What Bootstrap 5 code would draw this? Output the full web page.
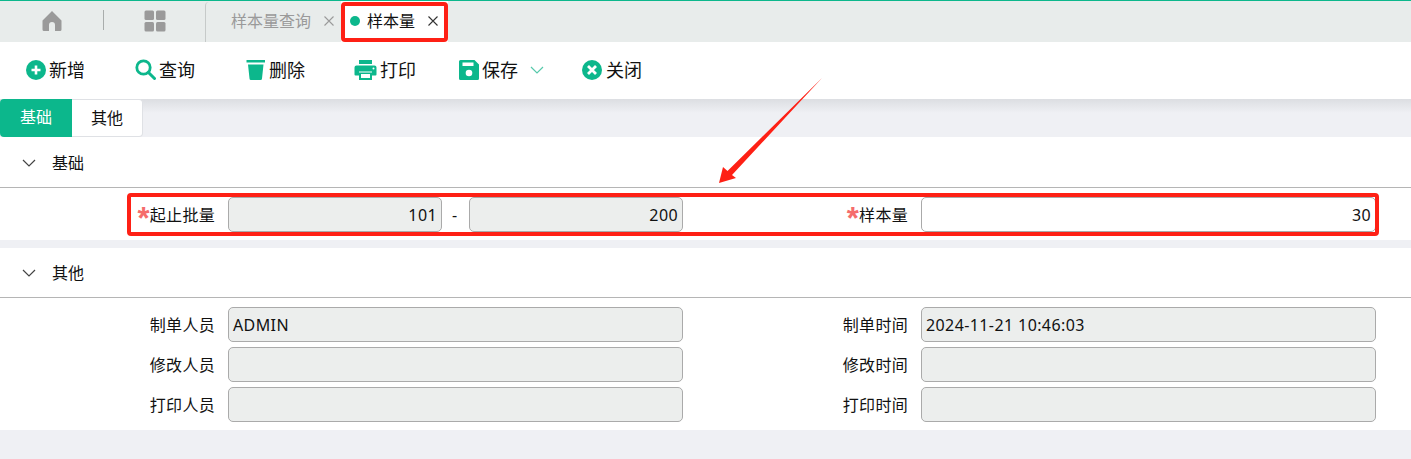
<!DOCTYPE html>
<html lang="zh">
<head>
<meta charset="utf-8">
<title>样本量</title>
<link href="https://cdn.jsdelivr.net/npm/bootstrap@5.3.0/dist/css/bootstrap.min.css" rel="stylesheet">
<style>
html,body{height:459px;overflow:hidden}
body{position:relative;background:#eff0f4;font-family:"Noto Sans","Noto Sans CJK SC",sans-serif;font-size:16px;color:#111}
.topline{height:1px;background:#0cb78c}
.tabbar{height:41px;background:#e8eceb}
.homecell{width:103px;padding-bottom:1px}
.sep{width:1px;height:20px;background:#a9adac;margin-top:9px}
.gridcell{width:101px;padding-bottom:1px}
.tabzone{border-left:1px solid #c6cac9;border-top-left-radius:4px;margin-top:1px;padding:0 0 3px 25px;width:136px;white-space:nowrap;gap:13px}
.tabtext{color:#9a9a9a;line-height:38px}
.closex{display:block}
.activetab{width:107px;height:41px;background:#fff;padding:0 0 2px 9px}
.activetab .dotgreen{width:10px;height:10px;border-radius:50%;background:#0cb78c;margin-right:7px}
.activetab .closex{margin-left:13px}
.toolbar{height:57px;background:#fff;font-size:18px;padding-left:26px}
.tool{height:55px;display:flex;align-items:center;gap:3px;color:#111;line-height:1;flex:none}
.tool1{width:109px}.tool2{width:111px}.tool3{width:108px}.tool4{width:105px}.tool5{width:123px}
.tool6{gap:4px}
.chev{margin-left:9px}
.band{height:38px;background:linear-gradient(#dcdee2,#eff0f4 14px,#eff0f4)}
.stab{height:38px;width:72px;text-align:center;line-height:37px;background:#0cb78c;color:#fff;border-radius:4px 0 0 4px}
.stab2{width:71px;background:#fff;color:#111;border:1px solid #dfe1e5;border-left:0;border-radius:0 4px 4px 0}
.panel{background:#fff}
.panel1{height:103px}
.panel2{height:182px}
.panelhead{height:51px;border-bottom:1px solid #b5b5b5;padding:2px 0 0 22px;gap:16px;line-height:1}
.panel2 .panelhead{height:50px;padding-top:1px}
.fgrid{display:grid;grid-template-columns:228px 455px 238px 455px;row-gap:5px;align-items:center;padding-top:9px}
.flabel{text-align:right;padding-right:13px;line-height:34px;white-space:nowrap;letter-spacing:.3px}
.star{font-family:"Liberation Sans",sans-serif;font-weight:700;color:#f56c6c;font-size:31px;line-height:1;vertical-align:-8px;display:inline-block;margin-right:0;height:22px}
.finput{height:35px;border:1px solid #aaa;border-radius:5px;background:#eceeed;padding:0 4px;line-height:34px;color:#111;white-space:nowrap;overflow:hidden;letter-spacing:.4px}
.finput.num{text-align:right}
.finput.live{background:#fff}
.halfa,.halfb{width:214px}
.rangewrap{display:flex;align-items:center}
.dash{width:27px;text-align:center;padding-right:2px}
.redbox{position:absolute;border:4px solid #fe2015;border-radius:4px;pointer-events:none}
.redtab{left:341px;top:2px;width:107px;height:40px}
.redfield{left:127px;top:193px;width:1252px;height:43px}
.arrow{position:absolute;left:715px;top:75px;pointer-events:none}
</style>
</head>
<body>
<div class="topline"></div>
<div class="tabbar d-flex">
  <div class="homecell d-flex justify-content-center align-items-center">
    <svg width="22" height="22" viewBox="0 0 22 22"><path d="M11 1 1.500 10.500v9a1.500 1.500 0 0 0 1.500 1.500H8v-6a3 3 0 0 1 6 0v6h5a1.500 1.500 0 0 0 1.500-1.500v-9z" fill="#9a9a9a"/></svg>
  </div>
  <div class="sep"></div>
  <div class="gridcell d-flex justify-content-center align-items-center">
    <svg width="22" height="22" viewBox="0 0 22 22"><g fill="#9a9a9a"><rect x="0.500" y="0.500" width="9.500" height="9.500" rx="1.500"/><rect x="12" y="0.500" width="9.500" height="9.500" rx="1.500"/><rect x="0.500" y="12" width="9.500" height="9.500" rx="1.500"/><rect x="12" y="12" width="9.500" height="9.500" rx="1.500"/></g></svg>
  </div>
  <div class="tabzone d-flex align-items-center"><span class="tabtext">样本量查询</span><svg class="closex" width="10" height="10" viewBox="0 0 10 10"><path d="m.5.500 9 9M9.500.500l-9 9" stroke="#9a9a9a" stroke-width="1.100"/></svg></div>
  <div class="activetab d-flex align-items-center"><span class="dotgreen"></span><span>样本量</span><svg class="closex" width="10" height="10" viewBox="0 0 10 10"><path d="m.5.500 9 9M9.500.500l-9 9" stroke="#333" stroke-width="1.100"/></svg></div>
</div>
<div class="toolbar d-flex">
  <div class="tool tool1"><svg width="20" height="20" viewBox="0 0 20 20"><circle cx="10" cy="10" r="10" fill="#0cb78c"/><path d="M10 5.500v9M5.500 10h9" stroke="#fff" stroke-width="2.600"/></svg><span>新增</span></div>
  <div class="tool tool2"><svg width="21" height="21" viewBox="0 0 21 21"><circle cx="8.500" cy="8.500" r="6.700" fill="none" stroke="#0cb78c" stroke-width="2.800"/><path d="m13.500 13.500 6 6" stroke="#0cb78c" stroke-width="3" stroke-linecap="round"/></svg><span>查询</span></div>
  <div class="tool tool3"><svg width="20" height="20" viewBox="0 0 20 20"><path d="M0.500 0h18.500v2.500H0.500z" fill="#0cb78c"/><path d="M2 4.500h15.500l-1.500 14a1.500 1.500 0 0 1-1.500 1.500h-9.500a1.500 1.500 0 0 1-1.500-1.500z" fill="#0cb78c"/></svg><span>删除</span></div>
  <div class="tool tool4"><svg width="23" height="20" viewBox="0 0 23 20"><path d="M5 0h13v4H5z" fill="#0cb78c"/><path d="M2.500 5.500h18a2 2 0 0 1 2 2v7a1 1 0 0 1-1 1H18v-4H5v4H1.500a1 1 0 0 1-1-1v-7a2 2 0 0 1 2-2z" fill="#0cb78c"/><path d="M5 12.500h13V20H5z" fill="#0cb78c"/><path d="M7 14h9v4H7z" fill="#fff"/><circle cx="19.500" cy="8.500" r="1" fill="#fff"/></svg><span>打印</span></div>
  <div class="tool tool5"><svg width="20" height="20" viewBox="0 0 20 20"><path d="M1.500 0h14l4.500 4.500v14a1.500 1.500 0 0 1-1.500 1.500h-17A1.500 1.500 0 0 1 0 18.500v-17A1.500 1.500 0 0 1 1.500 0z" fill="#0cb78c"/><rect x="3.500" y="2.500" width="11" height="3.500" fill="#fff"/><circle cx="10" cy="13" r="3.300" fill="#fff"/></svg><span>保存</span><svg class="chev" width="14" height="8" viewBox="0 0 14 8"><path d="m1 1 6 6 6-6" fill="none" stroke="#57c9ab" stroke-width="1.200"/></svg></div>
  <div class="tool tool6"><svg width="20" height="20" viewBox="0 0 20 20"><circle cx="10" cy="10" r="10" fill="#0cb78c"/><path d="m6 6 8 8M14 6l-8 8" stroke="#fff" stroke-width="2.800"/></svg><span>关闭</span></div>
</div>

<div class="band d-flex">
  <div class="stab">基础</div>
  <div class="stab stab2">其他</div>
</div>

<section class="panel panel1 mb-2">
  <div class="panelhead d-flex align-items-center">
    <svg width="14" height="8" viewBox="0 0 14 8"><path d="m1 1 6 6 6-6" fill="none" stroke="#444" stroke-width="1.200"/></svg><span>基础</span>
  </div>
  <div class="fgrid">
    <div class="flabel"><span class="star">*</span>起止批量</div>
    <div class="rangewrap"><div class="finput num halfa">101</div><div class="dash">-</div><div class="finput num halfb">200</div></div>
    <div class="flabel"><span class="star">*</span>样本量</div>
    <div class="finput num live">30</div>
  </div>
</section>

<section class="panel panel2">
  <div class="panelhead d-flex align-items-center">
    <svg width="14" height="8" viewBox="0 0 14 8"><path d="m1 1 6 6 6-6" fill="none" stroke="#444" stroke-width="1.200"/></svg><span>其他</span>
  </div>
  <div class="fgrid">
    <div class="flabel">制单人员</div><div class="finput">ADMIN</div>
    <div class="flabel">制单时间</div><div class="finput">2024-11-21 10:46:03</div>
    <div class="flabel">修改人员</div><div class="finput"></div>
    <div class="flabel">修改时间</div><div class="finput"></div>
    <div class="flabel">打印人员</div><div class="finput"></div>
    <div class="flabel">打印时间</div><div class="finput"></div>
  </div>
</section>

<div class="redbox redtab"></div>
<div class="redbox redfield"></div>
<svg class="arrow" width="110" height="112" viewBox="0 0 110 112"><path d="M107 3 17 100l4 3-17 5 4-16 4.500 4z" fill="#fe2015"/></svg>
</body>
</html>
